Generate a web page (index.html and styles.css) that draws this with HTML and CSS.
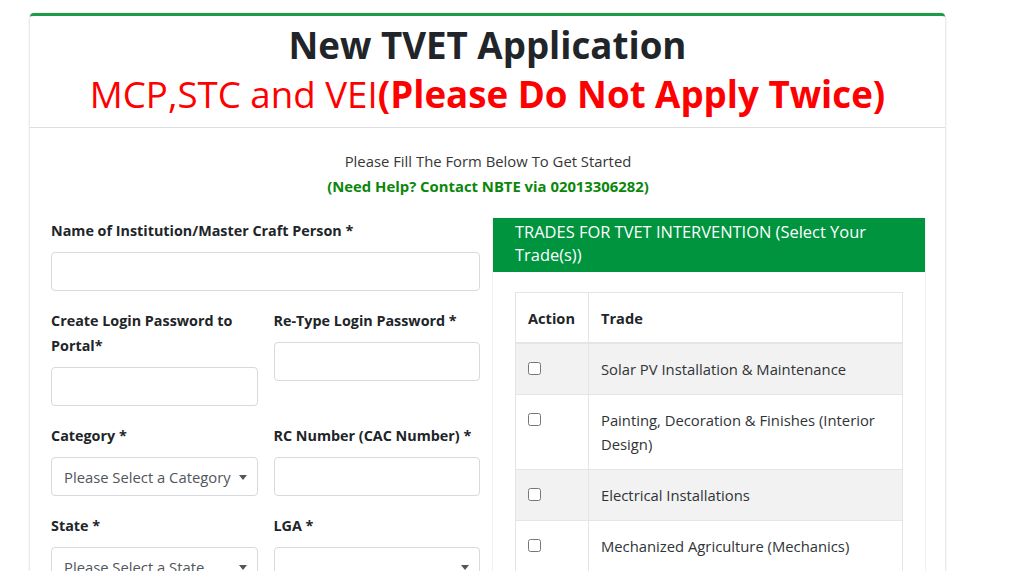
FILE: index.html
```html
<!DOCTYPE html>
<html lang="en">
<head>
<meta charset="utf-8">
<title>New TVET Application</title>
<link rel="stylesheet" href="styles.css">
</head>
<body>
<div class="page">
  <div class="card">
    <div class="card-header">
      <h1 class="title">New TVET Application<br><span class="red">MCP,STC and VEI<b>(Please Do Not Apply Twice)</b></span></h1>
    </div>
    <div class="card-body">
      <p class="intro">Please Fill The Form Below To Get Started<br><b class="help">(Need Help? Contact NBTE via 02013306282)</b></p>
      <div class="row">
        <div class="col-left">
          <div class="form-group">
            <label class="label">Name of Institution/Master Craft Person *</label>
            <input class="control" type="text">
          </div>
          <div class="subrow">
            <div class="form-group">
              <label class="label">Create Login Password to Portal*</label>
              <input class="control" type="password">
            </div>
            <div class="form-group">
              <label class="label">Re-Type Login Password *</label>
              <input class="control" type="password">
            </div>
          </div>
          <div class="subrow">
            <div class="form-group">
              <label class="label">Category *</label>
              <div class="select"><span class="select-text">Please Select a Category</span><span class="caret"></span></div>
            </div>
            <div class="form-group">
              <label class="label">RC Number (CAC Number) *</label>
              <input class="control" type="text">
            </div>
          </div>
          <div class="subrow">
            <div class="form-group">
              <label class="label">State *</label>
              <div class="select"><span class="select-text">Please Select a State</span><span class="caret"></span></div>
            </div>
            <div class="form-group">
              <label class="label">LGA *</label>
              <div class="select"><span class="select-text"></span><span class="caret"></span></div>
            </div>
          </div>
        </div>
        <div class="col-right">
          <div class="trades">
            <div class="trades-head">TRADES FOR TVET INTERVENTION (Select Your Trade(s))</div>
            <div class="trades-body">
              <table class="table">
                <thead>
                  <tr><th class="c-action">Action</th><th>Trade</th></tr>
                </thead>
                <tbody>
                  <tr><td><input type="checkbox" class="check"></td><td>Solar PV Installation &amp; Maintenance</td></tr>
                  <tr><td><input type="checkbox" class="check"></td><td>Painting, Decoration &amp; Finishes (Interior Design)</td></tr>
                  <tr><td><input type="checkbox" class="check"></td><td>Electrical Installations</td></tr>
                  <tr><td><input type="checkbox" class="check"></td><td>Mechanized Agriculture (Mechanics)</td></tr>
                  <tr><td><input type="checkbox" class="check"></td><td>Welding &amp; Fabrication</td></tr>
                </tbody>
              </table>
            </div>
          </div>
        </div>
      </div>
    </div>
  </div>
</div>
</body>
</html>
```

FILE: styles.css
```css
* { box-sizing: border-box; }
html, body { margin: 0; padding: 0; background: #fff; }
body {
  font-family: "Open Sans", "Noto Sans", sans-serif;
  font-size: 14.8px;
  color: #212529;
}
.page { padding: 13px 79px 0 30px; }
.card {
  width: 915px;
  background: #fff;
  border-top: 3px solid #1f9a46;
  border-radius: 4px;
  box-shadow: 0 0 1px rgba(0,0,0,.125), 0 1px 3px rgba(0,0,0,.2);
}
.card-header {
  padding: 5px 10px 8px;
  border-bottom: 1px solid rgba(0,0,0,.125);
  text-align: center;
}
.title {
  margin: 0;
  font-size: 36.7px;
  line-height: 49px;
  font-weight: 700;
  color: #212529;
}
.title .red { color: #ff0000; font-weight: 400; }
.title .red b { font-weight: 700; }
.card-body { padding: 21px 20px 20px 21px; }
.intro {
  margin: 0 0 19px;
  text-align: center;
  line-height: 25px;
  font-size: 14.85px;
  color: #373737;
}
.help { color: #0a870a; font-weight: 700; }
.row {
  display: grid;
  grid-template-columns: 429px 432px;
  column-gap: 13px;
  align-items: start;
}
.subrow {
  display: grid;
  grid-template-columns: minmax(0, 1fr) minmax(0, 1fr);
  column-gap: 16px;
  align-items: start;
}
.form-group { margin-bottom: 17px; min-width: 0; }
.label {
  display: block;
  font-weight: 700;
  font-size: 14.35px;
  line-height: 25px;
  margin-bottom: 9px;
  color: #212529;
}
.control, .select {
  display: block;
  width: 100%;
  height: 39px;
  border: 1px solid #d6d9dd;
  border-radius: 4px;
  background: #fff;
  font: inherit;
}
.select {
  position: relative;
  display: flex;
  align-items: center;
  padding: 0 18px 0 12px;
  font-size: 14.8px;
  color: #50565c;
}
.select-text { white-space: nowrap; overflow: hidden; }
.caret {
  position: absolute;
  right: 10px;
  top: 17px;
  width: 0; height: 0;
  border-style: solid;
  border-width: 5px 4px 0 4px;
  border-color: #555 transparent transparent transparent;
}
.trades {
  background: #fff;
  box-shadow: 0 0 1px rgba(0,0,0,.2), 0 1px 2px rgba(0,0,0,.08);
}
.trades-head {
  background: #00943f;
  color: #fff;
  font-size: 16.45px;
  line-height: 23px;
  padding: 2px 20px 6px 22px;
}
.trades-body { padding: 20px 22px 20px; }
.table {
  width: 100%;
  border-collapse: collapse;
  border: 1px solid #e3e6e9;
  line-height: 24px;
}
.table th, .table td {
  border: 1px solid #e3e6e9;
  padding: 13px 12px 13px;
  text-align: left;
  vertical-align: top;
}
.table th { border-bottom-width: 2px; padding-bottom: 12px; font-weight: 700; font-size: 14.6px; color: #212529; }
.table td { color: #2f3438; }
.c-action { width: 73px; }
.table tbody tr:nth-child(odd) { background: #f2f2f2; }
.check { margin: 5px 0 0; width: 13px; height: 13px; }
```
